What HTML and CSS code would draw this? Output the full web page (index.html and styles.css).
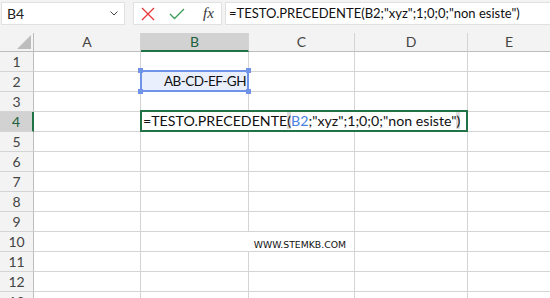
FILE: index.html
```html
<!DOCTYPE html>
<html lang="it">
<head>
    <meta charset="UTF-8">
    <title>TESTO.PRECEDENTE</title>
    <link rel="stylesheet" href="styles.css">
</head>
<body>
    <!-- Barra della formula -->
    <div class="topbar">
        <div class="namebox">
            <span>B4</span>
            <svg class="chevron" width="8" height="5" viewBox="0 0 8 5"><path d="M0.5 0.5 L4 4 L7.5 0.5" fill="none" stroke="#444" stroke-width="1"/></svg>
        </div>
        <div class="buttons">
            <svg width="14" height="14" viewBox="0 0 14 14"><path d="M1 1 L13 13 M13 1 L1 13" stroke="#e5373a" stroke-width="1.3" fill="none"/></svg>
            <svg width="16" height="12" viewBox="0 0 16 12"><path d="M1 6 L5.5 10.5 L15 1" stroke="#3c9b57" stroke-width="1.3" fill="none"/></svg>
            <span class="fx">fx</span>
        </div>
        <div class="formula">=TESTO.PRECEDENTE(B2;"xyz";1;0;0;"non esiste")</div>
    </div>

    <!-- Foglio -->
    <div class="sheet">
        <div class="corner"><span class="triangle"></span></div>
        <div class="colhead">A</div>
        <div class="colhead active">B</div>
        <div class="colhead">C</div>
        <div class="colhead">D</div>
        <div class="colhead last">E</div>

        <div class="rowhead">1</div><div class="cell"></div><div class="cell"></div><div class="cell"></div><div class="cell"></div><div class="cell last"></div>
        <div class="rowhead">2</div><div class="cell"></div><div class="cell"></div><div class="cell"></div><div class="cell"></div><div class="cell last"></div>
        <div class="rowhead">3</div><div class="cell"></div><div class="cell"></div><div class="cell"></div><div class="cell"></div><div class="cell last"></div>
        <div class="rowhead active">4</div><div class="cell"></div><div class="cell"></div><div class="cell"></div><div class="cell"></div><div class="cell last"></div>
        <div class="rowhead">5</div><div class="cell"></div><div class="cell"></div><div class="cell"></div><div class="cell"></div><div class="cell last"></div>
        <div class="rowhead">6</div><div class="cell"></div><div class="cell"></div><div class="cell"></div><div class="cell"></div><div class="cell last"></div>
        <div class="rowhead">7</div><div class="cell"></div><div class="cell"></div><div class="cell"></div><div class="cell"></div><div class="cell last"></div>
        <div class="rowhead">8</div><div class="cell"></div><div class="cell"></div><div class="cell"></div><div class="cell"></div><div class="cell last"></div>
        <div class="rowhead">9</div><div class="cell"></div><div class="cell"></div><div class="cell"></div><div class="cell"></div><div class="cell last"></div>
        <div class="rowhead">10</div><div class="cell"></div><div class="cell merged"><span class="site">WWW.STEMKB.COM</span></div><div class="cell"></div><div class="cell last"></div>
        <div class="rowhead">11</div><div class="cell"></div><div class="cell"></div><div class="cell"></div><div class="cell"></div><div class="cell last"></div>
        <div class="rowhead">12</div><div class="cell"></div><div class="cell"></div><div class="cell"></div><div class="cell"></div><div class="cell last"></div>
        <div class="rowhead">13</div><div class="cell"></div><div class="cell"></div><div class="cell"></div><div class="cell"></div><div class="cell last"></div>

        <!-- B2 riferimento -->
        <div class="ref">
            <span class="val">AB-CD-EF-GH</span>
            <i class="h tl"></i><i class="h tr"></i><i class="h bl"></i><i class="h br"></i>
        </div>

        <!-- B4 in modifica -->
        <div class="edit">=TESTO.PRECEDENTE<span class="par">(</span><span class="blue">B2</span>;"xyz";1;0;0;"non esiste"<span class="par">)</span></div>
    </div>
</body>
</html>
```

FILE: styles.css
```css
body {
    margin: 0;
    background: #ffffff;
    font-family: Lato, "Liberation Sans", sans-serif;
    overflow: hidden;
}
.topbar {
    display: flex;
    height: 33px;
    padding-top: 2px;
    box-sizing: border-box;
    background: #f3f3f3;
    gap: 8px;
}
.namebox, .buttons, .formula {
    height: 23px;
    box-sizing: border-box;
    background: #ffffff;
    border: 1px solid #e1e1e1;
}
.namebox {
    width: 124px;
    margin-left: 1px;
    display: flex;
    align-items: center;
    justify-content: space-between;
    padding: 0 6px 0 5px;
    font-size: 14px;
    color: #222;
}
.buttons {
    width: 89px;
    display: flex;
    align-items: center;
    padding-left: 7px;
    gap: 14px;
}
.fx {
    font-family: "Liberation Serif", serif;
    font-style: italic;
    font-size: 15px;
    color: #333;
    margin-left: 4px;
}
.formula {
    flex: 1;
    min-width: 0;
    margin-left: -5px;
    border-right: none;
    padding-left: 3px;
    font-size: 13px;
    line-height: 21px;
    color: #111;
    white-space: nowrap;
    overflow: hidden;
}
.sheet {
    position: relative;
    display: grid;
    grid-template-columns: 34px 107px 108px 106px 113px 1fr;
    grid-template-rows: 19px;
    grid-auto-rows: 20px;
}
.corner, .colhead, .rowhead, .cell {
    box-sizing: border-box;
    border-right: 1px solid #d4d4d4;
    border-bottom: 1px solid #d4d4d4;
}
.corner {
    position: relative;
    background: #f3f3f3;
    border-bottom-color: #bdbdbd;
    border-right-color: #bdbdbd;
}
.triangle {
    position: absolute;
    right: 2px;
    bottom: 2px;
    width: 0;
    height: 0;
    border-left: 14px solid transparent;
    border-bottom: 14px solid #bdbdbd;
}
.colhead {
    background: #f3f3f3;
    border-bottom-color: #bdbdbd;
    text-align: center;
    font-size: 14px;
    line-height: 18px;
    color: #444;
}
.colhead.active {
    background: #d2d2d2;
    border-bottom: 2px solid #217346;
    color: #1e5f3a;
}
.rowhead {
    background: #f3f3f3;
    border-right-color: #bdbdbd;
    text-align: center;
    font-size: 14px;
    line-height: 19px;
    color: #444;
}
.rowhead.active {
    background: #d2d2d2;
    border-right: 2px solid #217346;
    color: #1e5f3a;
}
.last {
    border-right: none;
}
.merged {
    grid-column: span 2;
    text-align: right;
    padding-right: 8px;
}
.site {
    font-family: "DejaVu Sans", sans-serif;
    font-size: 9.3px;
    line-height: 19px;
    color: #111;
}
.ref {
    position: absolute;
    left: 140px;
    top: 37px;
    width: 109px;
    height: 22px;
    box-sizing: border-box;
    border: 2px solid #6f93e8;
    background: #e9effc;
    text-align: right;
    padding-right: 1px;
    font-size: 13.5px;
    letter-spacing: -0.5px;
    line-height: 18px;
    color: #111;
}
.h {
    position: absolute;
    width: 5px;
    height: 5px;
    background: #6f93e8;
}
.tl { left: -4px; top: -4px; }
.tr { right: -4px; top: -4px; }
.bl { left: -4px; bottom: -4px; }
.br { right: -4px; bottom: -4px; }
.edit {
    position: absolute;
    left: 140px;
    top: 77px;
    width: 328px;
    height: 22px;
    box-sizing: border-box;
    border: 2px solid #217346;
    background: #ffffff;
    padding-left: 1px;
    font-size: 14.2px;
    line-height: 18px;
    color: #111;
    white-space: nowrap;
}
.blue {
    color: #4a7fe0;
}
.par {
    background: #dcdcdc;
}
```
